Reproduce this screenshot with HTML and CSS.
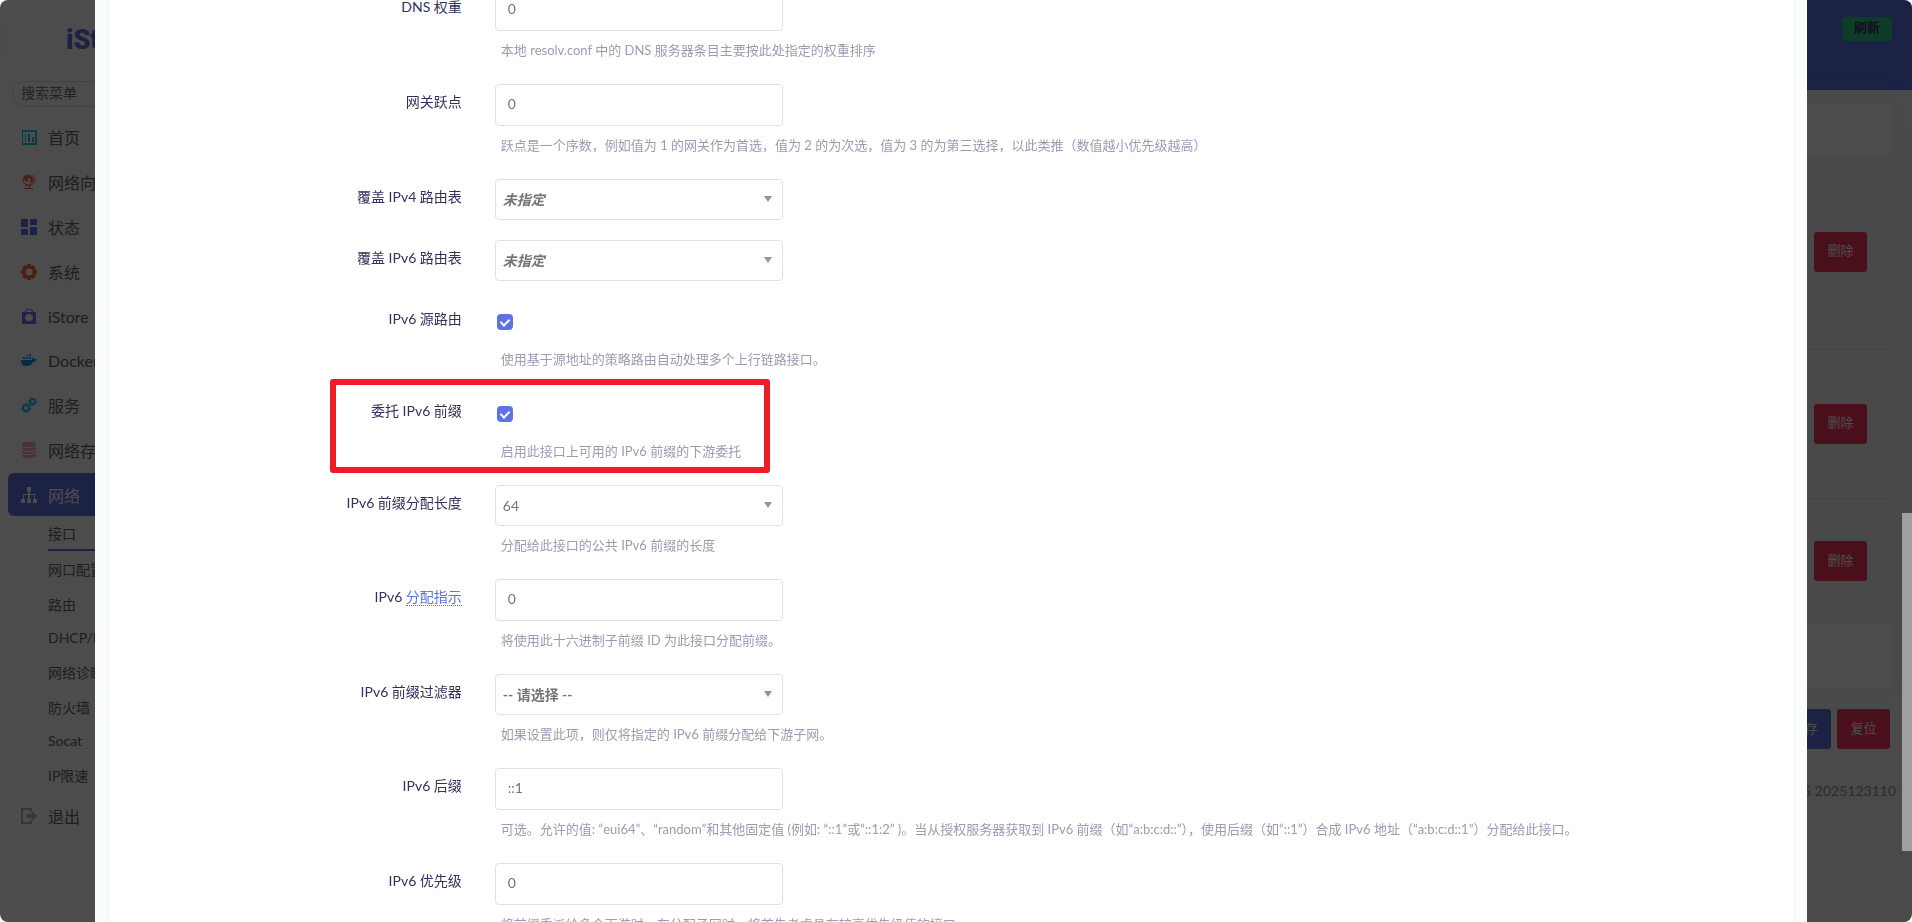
FILE: index.html
```
<!DOCTYPE html>
<html lang="zh-CN">
<head>
    <meta charset="UTF-8">
    <meta name="viewport" content="width=device-width, initial-scale=1.0">
    <title>接口 - iStoreOS</title>
    <link rel="stylesheet" href="styles.css">
</head>
<body>
    <div class="app">
        <aside class="sidebar">
            <a class="brand" href="#">iStoreOS</a>
            <input class="menu-search" type="text" placeholder="搜索菜单" aria-label="搜索菜单">
            <ul class="menu">
                <li><a href="#">
                    <svg class="icon cyan" viewBox="0 0 16 16"><path fill-rule="evenodd" d="M1 1h15v15H1zM2 3v11h12V3z"/><path d="M4 5h1v8H4zM7 5h2v8H7zM11 8h2v5h-2z"/></svg>
                    首页</a></li>
                <li><a href="#">
                    <svg class="icon orange" viewBox="0 0 16 16"><circle cx="7" cy="6" r="5" fill="none" stroke="currentColor"/><path d="M3 3l3-2 3 1-1 2-2 1 1 2-1 1-2-2-2-1zM9 2l3 2v3l-2 2-1-2 1-2-2-1z"/><path d="M12 1q4 5 0 9-3 3-8 1" fill="none" stroke="currentColor"/><path d="M8 12h1v2h3v1H3v-1h5z"/></svg>
                    网络向导</a></li>
                <li><a href="#">
                    <svg class="icon blue" viewBox="0 0 16 16"><path d="M0 0h7v8H0zM0 10h7v6H0zM9 0h7v6H9zM9 8h7v8H9z"/></svg>
                    状态</a></li>
                <li><a href="#">
                    <svg class="icon orange" viewBox="0 0 16 16"><circle cx="8" cy="8" r="5" fill="none" stroke="currentColor" stroke-width="3"/><path d="M6 0h4v3H6zM6 13h4v3H6zM0 6h3v4H0zM13 6h3v4h-3zM1 4l3-3 2 2-3 3zM12 1l3 3-2 2-3-3zM3 10l3 3-2 2-3-3zM13 10l2 2-3 3-2-2z"/></svg>
                    系统</a></li>
                <li><a class="latin" href="#">
                    <svg class="icon purple" viewBox="0 0 16 16"><path fill-rule="evenodd" d="M1 4h14v12H1zM8 6a4 3.500 0 1 0 0 7 4 3.500 0 1 0 0-7z"/><path d="M4 5q0-4 4-4t4 4" fill="none" stroke="currentColor"/></svg>
                    iStore</a></li>
                <li><a class="latin" href="#">
                    <svg class="icon docker" viewBox="0 0 16 16"><path d="M0 8h11q0-2 1-3 1 1 1 2h3q-1 3-4 3-2 4-7 4-5 0-5-6z"/><path d="M2 5h2v2H2zM5 5h2v2H5zM8 5h2v2H8zM5 3h2v1H5zM8 2h2v2H8z"/></svg>
                    Docker</a></li>
                <li><a href="#">
                    <svg class="icon cyan" viewBox="0 0 16 16"><g fill="none" stroke="currentColor"><circle cx="5" cy="11" r="3" stroke-width="2"/><circle cx="5" cy="11" r="4.500" stroke-dasharray="2 2"/><circle cx="11.500" cy="4.500" r="2.500" stroke-width="2"/><circle cx="11.500" cy="4.500" r="4" stroke-dasharray="2 2"/></g></svg>
                    服务</a></li>
                <li><a href="#">
                    <svg class="icon pink" viewBox="0 0 16 16"><path d="M1 2q0-2 7-2t7 2v1q0 2-7 2T1 3zM1 5q2 1 7 1t7-1v2q-1 2-7 2T1 7zM1 9q2 1 7 1t7-1v1q-1 2-7 2t-7-2zM1 12q2 1 7 1t7-1v2q-1 2-7 2t-7-2z"/></svg>
                    网络存储</a></li>
                <li><a class="active" href="#">
                    <svg class="icon" viewBox="0 0 16 16"><path d="M6 0h4v4H9v3h5v5h2v4h-4v-4h1V8H9v4h1v4H6v-4h1V8H3v4h1v4H0v-4h2V7h5V4H6z"/></svg>
                    网络</a>
                    <ul class="submenu">
                        <li><a class="current" href="#">接口</a></li>
                        <li><a href="#">网口配置</a></li>
                        <li><a href="#">路由</a></li>
                        <li><a class="latin" href="#">DHCP/DNS</a></li>
                        <li><a href="#">网络诊断</a></li>
                        <li><a href="#">防火墙</a></li>
                        <li><a class="latin" href="#">Socat</a></li>
                        <li><a href="#">IP限速</a></li>
                    </ul>
                </li>
                <li><a href="#">
                    <svg class="icon grey" viewBox="0 0 16 16"><path d="M10 4V1H1v14h9v-3" fill="none" stroke="currentColor" stroke-width="2"/><path d="M6 6h5V3l5 5-5 5v-3H6z"/></svg>
                    退出</a></li>
            </ul>
        </aside>

        <main class="main">
            <header class="topbar">
                <button class="refresh" type="button">刷新</button>
            </header>
            <section class="card">
                <div class="card-head"></div>
                <table class="interfaces">
                    <tr class="tall"><td><button class="btn danger" type="button">删除</button></td></tr>
                    <tr class="middle"><td><button class="btn danger" type="button">删除</button></td></tr>
                    <tr class="short"><td><button class="btn danger" type="button">删除</button></td></tr>
                </table>
                <div class="card-foot"></div>
            </section>
            <div class="actions">
                <button class="btn primary" type="button">保存</button>
                <button class="btn danger" type="button">复位</button>
            </div>
            <footer class="version">iStoreOS 24.10.5 2025123110</footer>
        </main>
    </div>

    <div class="overlay">
        <div class="modal-area">
            <div class="modal" role="dialog" aria-label="接口设置">
                <form class="panel">
                    <div class="row">
                        <label class="name" for="dns">DNS 权重</label>
                        <div class="field">
                            <input class="text" id="dns" type="text" placeholder="0">
                            <p class="hint">本地 resolv.conf 中的 DNS 服务器条目主要按此处指定的权重排序</p>
                        </div>
                    </div>
                    <div class="row">
                        <label class="name" for="metric">网关跃点</label>
                        <div class="field">
                            <input class="text" id="metric" type="text" placeholder="0">
                            <p class="hint">跃点是一个序数，例如值为 1 的网关作为首选，值为 2 的为次选，值为 3 的为第三选择，以此类推（数值越小优先级越高）</p>
                        </div>
                    </div>
                    <div class="row">
                        <label class="name" for="table4">覆盖 IPv4 路由表</label>
                        <div class="field">
                            <div class="dropdown"><select class="unset" id="table4"><option>未指定</option></select></div>
                        </div>
                    </div>
                    <div class="row">
                        <label class="name" for="table6">覆盖 IPv6 路由表</label>
                        <div class="field">
                            <div class="dropdown"><select class="unset" id="table6"><option>未指定</option></select></div>
                        </div>
                    </div>
                    <div class="row">
                        <label class="name" for="source">IPv6 源路由</label>
                        <div class="field">
                            <div class="check"><input id="source" type="checkbox" checked></div>
                            <p class="hint">使用基于源地址的策略路由自动处理多个上行链路接口。</p>
                        </div>
                    </div>
                    <div class="row marked">
                        <label class="name" for="delegate">委托 IPv6 前缀</label>
                        <div class="field">
                            <div class="check"><input id="delegate" type="checkbox" checked></div>
                            <p class="hint">启用此接口上可用的 IPv6 前缀的下游委托</p>
                        </div>
                    </div>
                    <div class="row">
                        <label class="name" for="assign">IPv6 前缀分配长度</label>
                        <div class="field">
                            <div class="dropdown"><select id="assign"><option>64</option></select></div>
                            <p class="hint">分配给此接口的公共 IPv6 前缀的长度</p>
                        </div>
                    </div>
                    <div class="row">
                        <label class="name" for="hint">IPv6 <a href="#">分配指示</a></label>
                        <div class="field">
                            <input class="text" id="hint" type="text" placeholder="0">
                            <p class="hint">将使用此十六进制子前缀 ID 为此接口分配前缀。</p>
                        </div>
                    </div>
                    <div class="row">
                        <label class="name" for="filter">IPv6 前缀过滤器</label>
                        <div class="field">
                            <div class="dropdown"><select class="choose" id="filter"><option>-- 请选择 --</option></select></div>
                            <p class="hint">如果设置此项，则仅将指定的 IPv6 前缀分配给下游子网。</p>
                        </div>
                    </div>
                    <div class="row">
                        <label class="name" for="suffix">IPv6 后缀</label>
                        <div class="field">
                            <input class="text" id="suffix" type="text" placeholder="::1">
                            <p class="hint">可选。允许的值: “eui64”、“random”和其他固定值 (例如: “::1”或“::1:2” )。当从授权服务器获取到 IPv6 前缀（如“a:b:c:d::”），使用后缀（如“::1”）合成 IPv6 地址（“a:b:c:d::1”）分配给此接口。</p>
                        </div>
                    </div>
                    <div class="row">
                        <label class="name" for="weight">IPv6 优先级</label>
                        <div class="field">
                            <input class="text" id="weight" type="text" placeholder="0">
                            <p class="hint">将前缀委派给多个下游时，在分配子网时，将首先考虑具有较高优先级值的接口。</p>
                        </div>
                    </div>
                </form>
            </div>
        </div>
        <div class="scroll-thumb"></div>
    </div>
</body>
</html>
```
FILE: styles.css
```
*, *::before, *::after {
    box-sizing: border-box;
}
body {
    margin: 0;
    height: 100vh;
    overflow: hidden;
    background: #fff;
    font-family: Lato, "Noto Sans CJK SC", sans-serif;
    font-size: 14px;
    color: #32325d;
}
ul, p {
    margin: 0;
    padding: 0;
    list-style: none;
}
input, select, button {
    font: inherit;
}

/* page behind the dialog */
.app {
    display: flex;
    height: 100vh;
    border-radius: 8px;
    overflow: hidden;
}
.sidebar {
    position: relative;
    flex: 0 0 240px;
    background: #fff;
    overflow: hidden;
}
.sidebar::before {
    content: "";
    position: absolute;
    left: -30px;
    top: 26px;
    width: 36px;
    height: 27px;
    border: 1px solid #f0f0f0;
    border-radius: 4px;
}
.brand {
    display: block;
    padding: 24px 0 0 66px;
    font-family: Roboto, sans-serif;
    font-size: 27px;
    line-height: 32px;
    font-weight: 900;
    color: #5e72e4;
    text-decoration: none;
}
.menu-search {
    display: block;
    width: 216px;
    height: 26px;
    margin: 25px 12px 7px;
    padding: 0 8px 3px;
    border: 1px solid #dee2e6;
    border-radius: 13px;
}
.menu a {
    display: flex;
    align-items: center;
    height: 43px;
    margin: 0 8px;
    padding-left: 13px;
    gap: 11px;
    border-radius: 6px;
    font-size: 16px;
    color: #666;
    text-decoration: none;
}
.menu > li {
    padding: 1px 0;
}
.menu a.latin {
    height: 42px;
}
.menu a.active {
    background: #5e72e4;
    color: #fff;
}
.icon {
    width: 16px;
    height: 16px;
    fill: currentColor;
}
.cyan { color: #11cdef; }
.orange { color: #fb6340; }
.blue { color: #5e72e4; }
.purple { color: #8965e0; }
.docker { color: #1d90e0; }
.pink { color: #f3a4b5; }
.grey { color: #adb5bd; }
.menu .submenu a {
    height: 35px;
    margin: 0 8px 0 48px;
    padding: 0;
    border-radius: 0;
    font-size: 14px;
}
.menu .submenu a.latin {
    height: 33px;
}
.menu .submenu a.current {
    border-bottom: 2px solid #5e72e4;
}

.main {
    flex: 1;
    background: #f8f9f8;
    padding-right: 20px;
}
.topbar {
    display: flex;
    justify-content: flex-end;
    align-items: flex-start;
    height: 90px;
    margin-right: -20px;
    padding: 17px 20px;
    background: #5e72e4;
}
.refresh {
    height: 24px;
    padding: 0 12px 4px;
    border: 0;
    border-radius: 4px;
    background: #2dce89;
    color: #32325d;
    font-size: 13px;
    font-weight: bold;
    line-height: 20px;
}
.card {
    margin: 14px 0 0 20px;
    border-radius: 6px;
    background: #fff;
    box-shadow: 0 0 30px rgba(136, 152, 170, 0.15);
}
.card-head {
    height: 51px;
}
.card-foot {
    height: 65px;
}
.interfaces {
    width: 100%;
    border-collapse: collapse;
}
.interfaces td {
    padding: 0 25px;
    text-align: right;
    background: #f5f5f5;
    border-bottom: 1px solid #dee2e6;
}
.tall { height: 194px; }
.middle { height: 149px; }
.short { height: 126px; }
.interfaces .tall td {
    background: #f4f6fb;
}
.interfaces .short td {
    border-bottom: 0;
}
.btn {
    width: 53px;
    height: 40px;
    padding: 0 0 4px;
    border: 0;
    border-radius: 3px;
    font-size: 13px;
    color: #fff;
    vertical-align: middle;
}
.danger { background: #f5365c; }
.primary { background: #5e72e4; }
.actions {
    display: flex;
    justify-content: flex-end;
    gap: 6px;
    padding: 20px 2px 0 0;
}
.version {
    margin: 32px -4px 0 0;
    text-align: right;
    font-size: 14px;
    line-height: 20px;
    color: #8898aa;
}

/* dialog */
.overlay {
    position: fixed;
    inset: 0;
    display: flex;
    background: rgba(0, 0, 0, 0.7);
    border-radius: 8px;
    overflow: hidden;
}
.modal-area {
    flex: 1;
}
.modal {
    width: 90%;
    min-height: 100%;
    margin: 0 auto;
    padding: 0 14px;
    background: #fbfdfc;
}
.scroll-thumb {
    width: 10px;
    height: 338px;
    margin-top: 513px;
    background: #9f9f9f;
}
.panel {
    margin-top: -11px;
    padding-left: 20px;
    background: #fff;
    box-shadow: 0 0 6px rgba(136, 152, 170, 0.1);
}
.row {
    display: flex;
    gap: 33px;
    padding-bottom: 20px;
}
.name {
    flex: 0 0 20%;
    text-align: right;
    line-height: 36px;
}
.name a {
    color: #5e72e4;
    text-decoration: none;
    border-bottom: 1px dotted #5e72e4;
}
.field {
    flex: 1;
}
.text, .dropdown {
    display: block;
    width: 288px;
    border: 1px solid #dee2e6;
    border-radius: 4px;
    background: #fff;
}
.text {
    height: 42px;
    padding: 0 12px 3px;
}
.text::placeholder, .menu-search::placeholder {
    color: #757575;
}
.dropdown {
    position: relative;
    height: 41px;
}
.dropdown::after {
    content: "";
    position: absolute;
    right: 10px;
    top: 16px;
    border: 4px solid transparent;
    border-top: 6px solid #8898aa;
    border-bottom: 0;
    pointer-events: none;
}
.dropdown select {
    appearance: none;
    width: 100%;
    height: 100%;
    padding: 0 7px 1px;
    border: 0;
    background: none;
    color: #757575;
}
.dropdown .unset {
    font-weight: bold;
    font-style: italic;
}
.dropdown .choose {
    font-weight: bold;
}
.check {
    height: 39px;
    padding: 13px 2px 0;
}
.check input {
    appearance: none;
    display: block;
    position: relative;
    width: 16px;
    height: 16px;
    margin: 0;
    border-radius: 4px;
    background: #5e72e4;
}
.check input:checked::after {
    content: "";
    position: absolute;
    left: 5px;
    top: 3px;
    width: 6px;
    height: 9px;
    border: solid #fff;
    border-width: 0 2px 2px 0;
    transform: rotate(45deg);
}
.hint {
    height: 33px;
    padding: 10px 0 0 6px;
    font-size: 13px;
    line-height: 19px;
    color: #9b9bb4;
}
.marked {
    position: relative;
}
.marked::after {
    content: "";
    position: absolute;
    left: 201px;
    top: -14px;
    width: 440px;
    height: 94px;
    border: 6px solid #ee1c25;
    border-radius: 3px;
    pointer-events: none;
}
```
